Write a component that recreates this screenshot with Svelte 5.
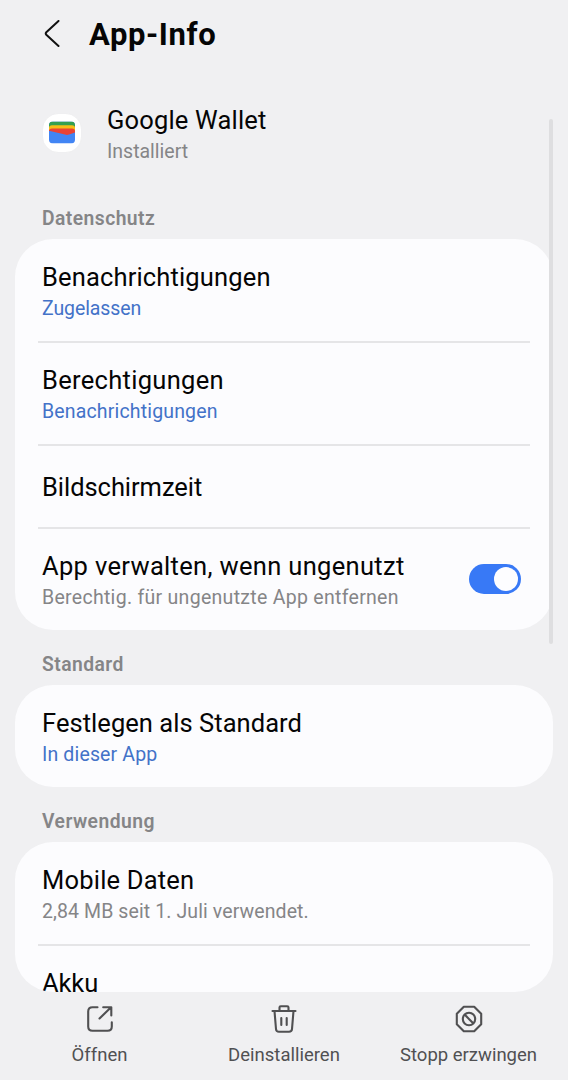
<script>
  let enabled = true;

  // spacing is the letter spacing in px: [title, sub]
  const sections = [
    {
      label: "Datenschutz",
      rows: [
        { title: "Benachrichtigungen", sub: "Zugelassen", link: true, spacing: [0.15, -0.1] },
        { title: "Berechtigungen", sub: "Benachrichtigungen", link: true, spacing: [0.3, 0.16] },
        { title: "Bildschirmzeit", spacing: [-0.05, 0] },
        {
          title: "App verwalten, wenn ungenutzt",
          sub: "Berechtig. für ungenutzte App entfernen",
          toggle: true,
          spacing: [0.32, 0.29],
        },
      ],
    },
    {
      label: "Standard",
      rows: [
        { title: "Festlegen als Standard", sub: "In dieser App", link: true, spacing: [0.05, 0.15] },
      ],
    },
    {
      label: "Verwendung",
      rows: [
        { title: "Mobile Daten", sub: "2,84 MB seit 1. Juli verwendet.", spacing: [0.2, 0.1] },
        { title: "Akku", spacing: [-0.1, 0] },
      ],
    },
  ];
</script>

<style>
  :global(body) {
    background: #f0f0f2;
  }

  .screen {
    position: relative;
    display: flex;
    flex-direction: column;
    width: 568px;
    height: 1080px;
    overflow: hidden;
    background: #f0f0f2;
    color: #050505;
    font-family: Roboto, "Liberation Sans", sans-serif;
  }

  button {
    border: 0;
    padding: 0;
    background: none;
    color: inherit;
    font: inherit;
  }

  svg {
    display: block;
  }

  .header {
    display: flex;
    flex: none;
    align-items: center;
    height: 70px;
    padding-left: 42px;
  }

  .back {
    width: 47px;
  }

  h1 {
    margin: 0;
    padding-bottom: 2px;
    font-size: 31px;
    font-weight: 700;
    letter-spacing: 0.6px;
  }

  .app {
    display: flex;
    flex: none;
    align-items: flex-start;
    height: 63px;
    padding: 34px 0 0 42px;
  }

  .app-icon {
    width: 65px;
    padding-top: 9px;
  }

  .app-name {
    letter-spacing: 0.18px;
  }

  .content {
    display: flex;
    flex: 1;
    flex-direction: column;
    min-height: 0;
    padding: 0 15px;
    overflow: hidden;
  }

  section {
    display: flex;
    flex: none;
    flex-direction: column;
  }

  section:last-child {
    flex: 1;
    min-height: 0;
  }

  h2 {
    flex: none;
    margin: 0;
    padding: 13px 27px 0;
    height: 42px;
    color: #858587;
    font-size: 19.3px;
    font-weight: 600;
    line-height: 43px;
    letter-spacing: 0.45px;
  }

  section:first-child h2 {
    padding-top: 30px;
  }

  .card {
    flex: 1;
    min-height: 0;
    padding: 1px 23px 0;
    overflow: hidden;
    border-radius: 38px;
    background: #fcfcfe;
  }

  .row {
    display: flex;
    box-sizing: border-box;
    align-items: center;
    height: 103px;
    padding: 0 9px 0 4px;
    border-bottom: 2px solid #e5e5e7;
  }

  .row.single {
    height: 83px;
  }

  .row:last-child {
    height: 101px;
    border-bottom: 0;
  }

  .row.single:last-child {
    height: 71px;
  }

  .text {
    flex: 1;
    padding-top: 3px;
    white-space: nowrap;
  }

  .single .text {
    padding-top: 1px;
  }

  .row:last-child .text {
    padding-top: 3px;
  }

  .title {
    font-size: 25.5px;
    line-height: 32px;
  }

  .sub {
    color: #858587;
    font-size: 19.5px;
    line-height: 31px;
  }

  .sub.link {
    color: #4372c8;
  }

  .switch {
    display: flex;
    justify-content: flex-end;
    box-sizing: border-box;
    width: 52px;
    height: 30px;
    margin-bottom: 2px;
    padding: 3px;
    border-radius: 15px;
    background: #3879f6;
  }

  .switch.off {
    justify-content: flex-start;
  }

  .knob {
    width: 24px;
    height: 24px;
    border-radius: 50%;
    background: #fdfdff;
  }

  .scrollbar {
    position: absolute;
    top: 119px;
    left: 549px;
    width: 4px;
    height: 525px;
    border-radius: 2px;
    background: #dedee0;
  }

  .actions {
    display: flex;
    flex: none;
    justify-content: space-between;
    height: 88px;
    padding: 0 7.5px;
    color: #505052;
  }

  .actions button {
    display: flex;
    flex-direction: column;
    align-items: center;
    width: 184px;
    padding-top: 12px;
    font-size: 18.5px;
    line-height: 42px;
    white-space: nowrap;
  }
</style>

<div class="screen">
  <header class="header">
    <button class="back" aria-label="Zurück">
      <svg width="20" height="30" viewBox="0 0 20 30" fill="none" stroke="#111" stroke-width="2" stroke-linecap="round" stroke-linejoin="round">
        <path d="M16.5 1 L4.3 12.3 Q3.2 13.5 4.3 14.7 L16.5 26" />
      </svg>
    </button>
    <h1>App-Info</h1>
  </header>

  <div class="app">
    <div class="app-icon">
      <svg width="40" height="40" viewBox="0 0 40 40">
        <rect x="0.5" y="0.5" width="39" height="39" rx="16" fill="#fff" stroke="#e9e9eb" stroke-width="0.6" />
        <clipPath id="wallet"><rect x="7" y="8.5" width="26" height="22" rx="4" /></clipPath>
        <g clip-path="url(#wallet)">
          <rect x="7" y="8.5" width="26" height="22" fill="#4285f4" />
          <rect x="7" y="8.5" width="26" height="6" fill="#34a04f" />
          <path d="M7 15 Q7 12.3 10 12.3 H30 Q33 12.3 33 15 V18 H7Z" fill="#f7bd16" />
          <path d="M7 18 Q7 15.5 10 15.5 H30 Q33 15.5 33 18 V19.5 L27 21.6 Q25 22.2 23 21.6 L7 17.8Z" fill="#ea4335" />
        </g>
      </svg>
    </div>
    <div>
      <div class="title app-name">Google Wallet</div>
      <div class="sub">Installiert</div>
    </div>
  </div>

  <main class="content">
    {#each sections as section}
      <section>
        <h2>{section.label}</h2>
        <div class="card">
          {#each section.rows as row}
            <div class="row" class:single={!row.sub}>
              <div class="text">
                <div class="title" style="letter-spacing: {row.spacing[0]}px">{row.title}</div>
                {#if row.sub}
                  <div class="sub" class:link={row.link} style="letter-spacing: {row.spacing[1]}px">{row.sub}</div>
                {/if}
              </div>
              {#if row.toggle}
                <button class="switch" class:off={!enabled} aria-label={row.title} on:click={() => (enabled = !enabled)}>
                  <span class="knob"></span>
                </button>
              {/if}
            </div>
          {/each}
        </div>
      </section>
    {/each}
  </main>

  <div class="scrollbar"></div>

  <nav class="actions">
    <button>
      <svg width="30" height="30" viewBox="0 0 30 30" fill="none" stroke="currentColor" stroke-width="2.1" stroke-linecap="round" stroke-linejoin="round">
        <path d="M12.5 3.2 H7.5 Q3.2 3.2 3.2 7.5 V22.5 Q3.2 26.8 7.5 26.8 H22.5 Q26.8 26.8 26.8 22.5 V18.2" />
        <path d="M14.5 14.5 L25.8 3.6 M18.2 3.2 H26.3 V11.5" />
      </svg>
      <span>Öffnen</span>
    </button>
    <button>
      <svg width="30" height="30" viewBox="0 0 30 30" fill="none" stroke="currentColor" stroke-width="2.1" stroke-linecap="round" stroke-linejoin="round">
        <path d="M3.5 7 H26.5 M10.5 7 V3.5 Q10.5 2.2 11.8 2.2 H18.2 Q19.5 2.2 19.5 3.5 V7" />
        <path d="M5.5 7 L7 25 Q7.2 27.8 10 27.8 H20 Q22.8 27.8 23 25 L24.5 7 M12.3 14 V21 M17.7 14 V21" />
      </svg>
      <span>Deinstallieren</span>
    </button>
    <button>
      <svg width="30" height="30" viewBox="0 0 30 30" fill="none" stroke="currentColor" stroke-width="2.1" stroke-linejoin="round">
        <path d="M9.8 2.8 H20.2 L27.2 9.8 V20.2 L20.2 27.2 H9.8 L2.8 20.2 V9.8Z" />
        <circle cx="15" cy="15" r="6.2" />
        <path d="M10.6 10.6 L19.4 19.4" />
      </svg>
      <span>Stopp erzwingen</span>
    </button>
  </nav>
</div>
